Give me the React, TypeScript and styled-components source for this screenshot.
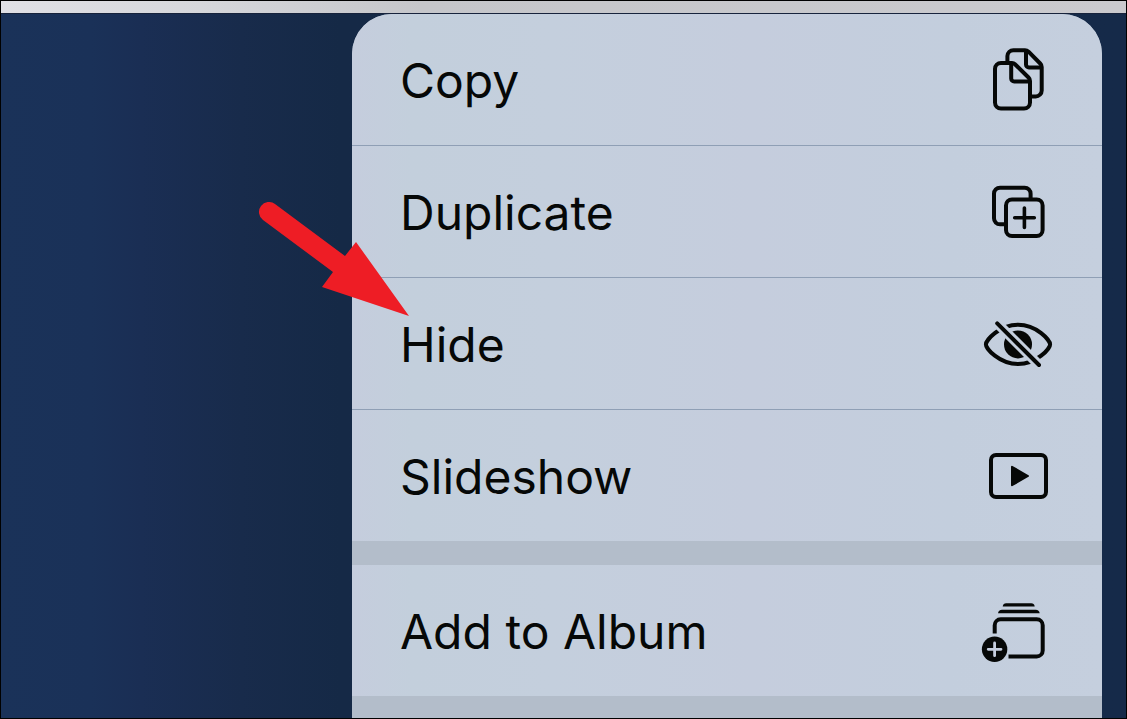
import React from "react";
import styled, { createGlobalStyle } from "styled-components";

const GlobalStyle = createGlobalStyle`
  *, *::before, *::after { box-sizing: border-box; }
  body {
    margin: 0;
    font-family: Inter, "Liberation Sans", sans-serif;
    color: #060807;
  }
`;

const Screen = styled.main`
  display: flex;
  flex-direction: column;
  min-height: 100vh;
  border: 1px solid #000;
  background: linear-gradient(to right, #1a3259 0, #1a3158 90px, #1a2e54 140px, #182b4b 240px, #152946 340px, #152a49 100%);
`;

const TopStrip = styled.div`
  height: 13px;
  border-bottom: 1px solid #17233c;
  background: linear-gradient(to right, #e0e0e5 0, #d6d7db 200px, #c5c6ca 420px, #cacace 100%);
`;

const Stage = styled.div`
  flex: 1;
  display: flex;
  justify-content: flex-end;
  padding-right: 24px;
`;

const Menu = styled.nav`
  position: relative;
  flex: 0 1 750px;
  display: flex;
  flex-direction: column;
  border-radius: 40px 40px 0 0;
  background: #b3bdca;
`;

const Group = styled.ul`
  list-style: none;
  margin: 0;
  padding: 0;
  background: linear-gradient(to right, #c5cddd 0, #c3cfdc 60px, #c4cfdd 200px, #c5cddd 400px, #c3cedd 600px, #c5cfde 100%);

  &:first-child {
    border-radius: 40px 40px 0 0;
  }

  & + & {
    margin-top: 24px;
  }
`;

const Item = styled.li`
  & + & {
    border-top: 1px solid #8f9fb5;
  }
`;

const ItemButton = styled.button`
  display: flex;
  align-items: center;
  justify-content: space-between;
  width: 100%;
  height: 131px;
  padding: 0 48px;
  border: 0;
  background: none;
  color: inherit;
  font: inherit;
  font-size: 48px;
  line-height: 60px;
  text-align: left;
  cursor: pointer;
`;

const Label = styled.span`
  padding-top: 3px;
`;

const Glyph = styled.svg`
  flex: none;
  width: 72px;
  height: 71px;
  overflow: visible;
  fill: none;
  stroke: currentColor;
  stroke-width: 4;
  stroke-linecap: round;
  stroke-linejoin: round;
`;

const Pointer = styled.svg`
  position: absolute;
  left: -93px;
  top: 188px;
  width: 150px;
  height: 114px;
  fill: #ee1d25;
  pointer-events: none;
`;

const CopyIcon = () => (
  <Glyph viewBox="0 0 72 71" aria-hidden="true">
    <path d="M30 19H19a6 6 0 0 0-6 6v33.500a6 6 0 0 0 6 6h23a6 6 0 0 0 6-6V37q0-2-1.500-3.500L33 20.300Q31.700 19 30 19Z" />
    <path d="M29.200 20v14.500a3 3 0 0 0 3 3H47" />
    <path strokeLinecap="butt" d="M25.400 18v-6a6 6 0 0 1 6-5.800H43q2 0 3.500 1.400L58.200 19.500Q59.700 21 59.700 23v23.400a6 6 0 0 1-6 6H49" />
    <path d="M44 7v13.500a3 3 0 0 0 3 3h12" />
  </Glyph>
);

const DuplicateIcon = () => (
  <Glyph viewBox="0 0 72 71" aria-hidden="true">
    <path strokeLinecap="butt" d="M24 48.300h-6a6 6 0 0 1-6-6V17.700a6 6 0 0 1 6-6h24.600a6 6 0 0 1 6 6v6" />
    <rect x="24" y="23.500" width="36.600" height="36.600" rx="6" />
    <path strokeWidth="3.600" d="M32.700 41.700h19.600M42.400 32v19.500" />
  </Glyph>
);

const HideIcon = () => (
  <Glyph viewBox="0 0 72 71" aria-hidden="true">
    <mask id="slash-gap" maskUnits="userSpaceOnUse" x="0" y="0" width="72" height="71">
      <rect width="72" height="71" fill="#fff" stroke="none" />
      <path d="M8 8l56 56" stroke="#000" strokeWidth="10" />
    </mask>
    <g mask="url(#slash-gap)">
      <path d="M3.900 36.400C3.900 32.500 17 16.800 36 16.800S68.100 32.500 68.100 36.400 55 56 36 56 3.900 40.300 3.900 36.400Z" />
      <circle cx="36" cy="36.400" r="14" fill="currentColor" stroke="none" />
    </g>
    <path d="M15.200 15.300L57 57" />
  </Glyph>
);

const SlideshowIcon = () => (
  <Glyph viewBox="0 0 72 71" aria-hidden="true">
    <rect x="9" y="15" width="55" height="42" rx="5" />
    <path strokeWidth="2" fill="currentColor" d="M30 26.800v18.400L46 36Z" />
  </Glyph>
);

const AlbumIcon = () => (
  <Glyph viewBox="0 0 72 71" aria-hidden="true">
    <path stroke="none" fill="currentColor" d="M20.700 11.500q.5-3.300 3.500-3.300h25q3 0 3.500 3.300Z" />
    <path stroke="none" fill="currentColor" d="M16 18.300q.5-3.600 4-3.600h33.700q3.500 0 4 3.600Z" />
    <path strokeLinecap="butt" d="M12.700 38.500V30.300a6 6 0 0 1 6-6h36a6 6 0 0 1 6 6v25.100a6 6 0 0 1-6 6H26.500" />
    <circle cx="12.600" cy="54.300" r="12.700" fill="currentColor" stroke="none" />
    <path stroke="#c5cddd" strokeWidth="2.800" d="M6.200 54.300h12.800M12.600 47.900v12.800" />
  </Glyph>
);

const groups = [
  [
    { label: "Copy", Icon: CopyIcon },
    { label: "Duplicate", Icon: DuplicateIcon },
    { label: "Hide", Icon: HideIcon },
    { label: "Slideshow", Icon: SlideshowIcon },
  ],
  [{ label: "Add to Album", Icon: AlbumIcon }],
];

export default function App() {
  return (
    <>
      <GlobalStyle />
      <Screen>
        <TopStrip />
        <Stage>
          <Menu aria-label="Photo actions">
            {groups.map((items, index) => (
              <Group key={index}>
                {items.map(({ label, Icon }) => (
                  <Item key={label}>
                    <ItemButton type="button">
                      <Label>{label}</Label>
                      <Icon />
                    </ItemButton>
                  </Item>
                ))}
              </Group>
            ))}
            <Pointer viewBox="0 0 150 114" aria-hidden="true">
              <path d="M16 2L86 54l11-14 53 74-87-29 11-15L4 18A10 10 0 0 1 16 2Z" />
            </Pointer>
          </Menu>
        </Stage>
      </Screen>
    </>
  );
}
